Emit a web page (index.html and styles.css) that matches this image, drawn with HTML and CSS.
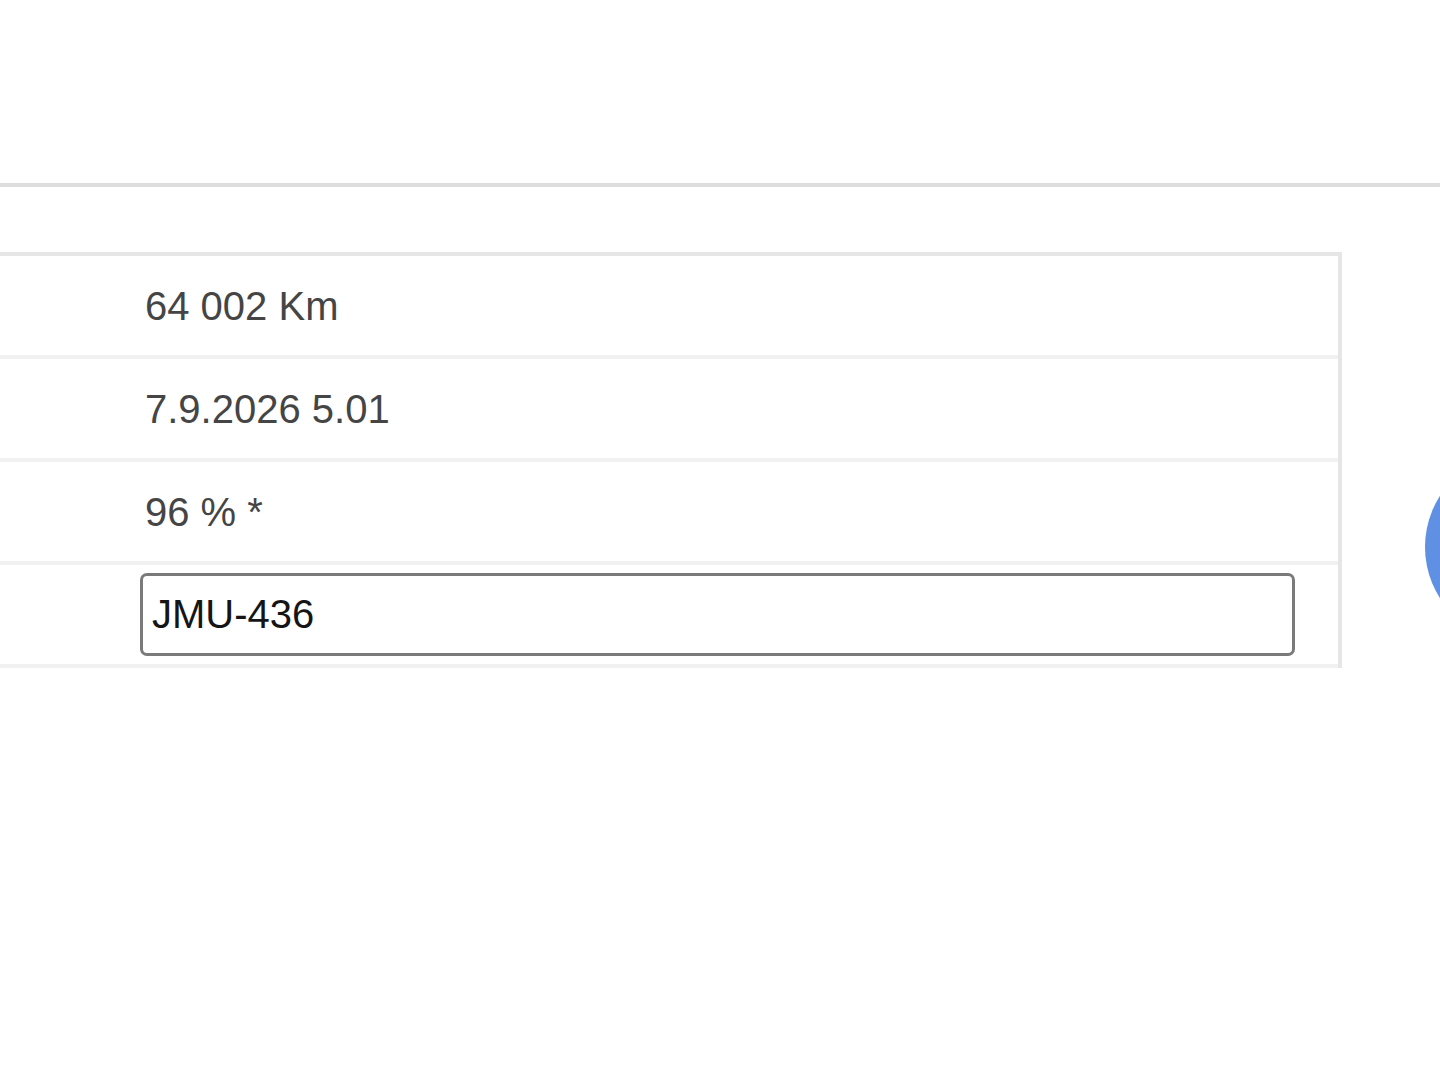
FILE: index.html
```html
<!DOCTYPE html>
<html lang="fi">
<head>
<meta charset="utf-8">
<title>Ajoneuvo</title>
<link rel="stylesheet" href="styles.css">
</head>
<body>
<header class="topbar"></header>
<main class="content">
  <div class="details">
    <div class="row"><div class="label"></div><div class="value">64 002 Km</div></div>
    <div class="row"><div class="label"></div><div class="value">7.9.2026 5.01</div></div>
    <div class="row"><div class="label"></div><div class="value">96 % *</div></div>
    <div class="row"><div class="label"></div><div class="value"><input class="plate" type="text" value="JMU-436"></div></div>
  </div>
</main>
<button class="fab" aria-label="action"></button>
</body>
</html>
```
FILE: styles.css
```css
html, body {
  margin: 0;
  padding: 0;
  background: #ffffff;
}
body {
  font-family: "Liberation Sans", Arial, sans-serif;
  color: #444444;
  position: relative;
  min-height: 1080px;
  overflow: hidden;
}
.topbar {
  height: 183px;
  border-bottom: 4px solid #dddddd;
}
.content {
  padding-top: 65px;
}
.details {
  width: 1338px;
  border-top: 4px solid #e6e6e6;
  border-right: 4px solid #e6e6e6;
}
.row {
  display: flex;
  align-items: center;
  height: 99px;
  border-bottom: 4px solid #f1f1f1;
}
.label {
  width: 0;
}
.value {
  flex: 1;
  padding-left: 145px;
  font-size: 40px;
  line-height: 46px;
  color: #454545;
}
.row:last-child .value {
  padding-left: 140px;
}
.plate {
  display: block;
  box-sizing: border-box;
  width: 1155px;
  height: 83px;
  margin: 0;
  padding: 0 0 0 9px;
  border: 3px solid #7a7a7a;
  border-radius: 7px;
  font-family: "Liberation Sans", Arial, sans-serif;
  font-size: 40px;
  color: #151515;
  background: #ffffff;
  outline: none;
}
.fab {
  position: absolute;
  left: 1425px;
  top: 452px;
  width: 190px;
  height: 190px;
  border: none;
  border-radius: 50%;
  background: #5f90e3;
  padding: 0;
}
```
